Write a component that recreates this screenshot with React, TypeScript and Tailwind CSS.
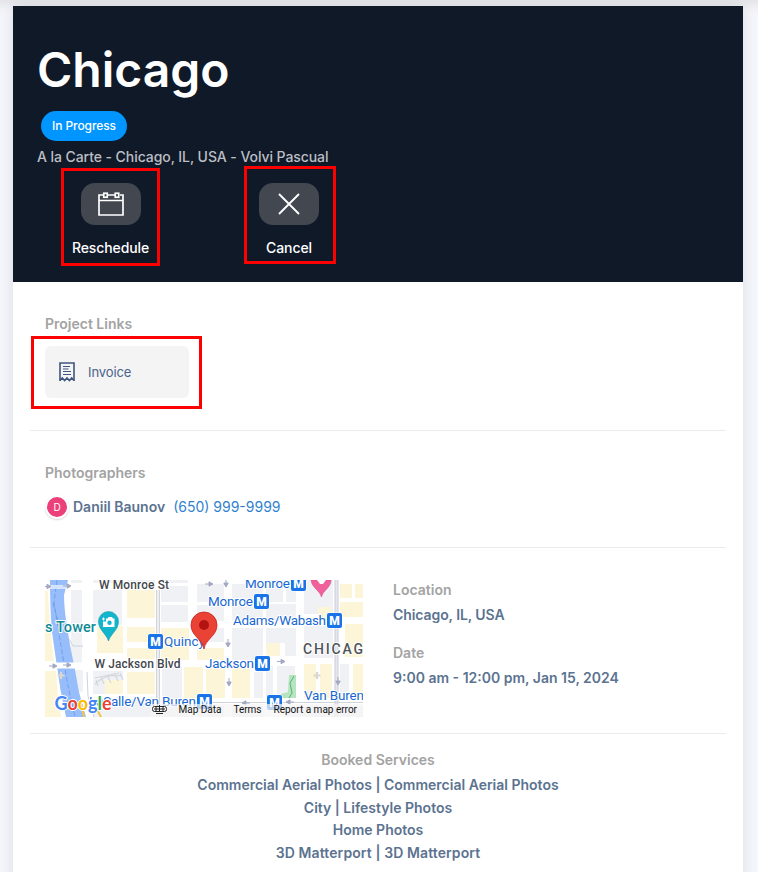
import React from 'react';

type Block = [number, number, number, number, string];
const G = '#eff1f4';
const C = '#fdf5d8';

const blocks: Block[] = [
  [71, 580, 11, 3, G], [71, 590, 11, 73, G], [73, 670, 10, 22, G],
  [93, 580, 29, 3, G], [93, 590, 29, 35, G], [97, 626, 26, 27, C], [93, 671, 30, 23, G], [105, 680, 18, 14, C],
  [127, 580, 28, 3, G], [127, 590, 28, 28, C], [127, 627, 28, 15, C], [127, 648, 28, 11, C], [127, 672, 28, 22, C],
  [161, 580, 27, 3, G], [161, 586, 27, 16, G], [161, 605, 27, 17, G], [161, 628, 28, 32, C], [162, 667, 20, 33, G],
  [197, 584, 27, 18, G], [197, 605, 27, 16, G], [197, 628, 27, 14, G], [197, 648, 27, 12, C],
  [184, 667, 19, 31, C], [206, 667, 19, 31, C],
  [232, 584, 31, 18, G], [232, 606, 31, 14, G], [232, 628, 31, 32, G], [232, 667, 18, 31, C], [254, 672, 9, 26, G],
  [266, 580, 17, 22, G], [286, 580, 10, 22, G], [266, 604, 30, 17, G], [266, 628, 30, 15, G], [266, 643, 14, 13, C],
  [285, 643, 11, 13, G], [266, 666, 7, 32, G], [277, 666, 18, 32, G],
  [304, 580, 29, 34, G], [318, 607, 14, 12, C], [304, 626, 29, 32, G], [304, 664, 12, 34, C], [320, 664, 12, 34, C],
  [340, 584, 12, 14, C], [355, 584, 8, 14, C], [340, 602, 23, 15, C], [345, 624, 18, 33, C], [340, 664, 9, 34, G], [353, 664, 10, 34, C],
  [93, 700, 62, 17, G], [161, 706, 27, 11, G], [197, 706, 27, 11, G], [232, 706, 31, 11, G], [284, 706, 49, 11, G], [340, 706, 23, 11, G],
];

type Label = { x: number; y: number; w?: number; t: string; c?: string; s?: number; b?: number };
const labels: Label[] = [
  { x: 99, y: 588.5, w: 70, t: 'W Monroe St', c: '#44474b', s: 12, b: 500 },
  { x: 94.5, y: 668, w: 86, t: 'W Jackson Blvd', c: '#44474b', s: 12, b: 500 },
  { x: 45, y: 632, w: 51, t: 's Tower', c: '#108a96', s: 14.5, b: 500 },
  { x: 245, y: 588, w: 45, t: 'Monroe' },
  { x: 208, y: 606, w: 45, t: 'Monroe' },
  { x: 233, y: 625, w: 93, t: 'Adams/Wabash' },
  { x: 164, y: 646, w: 41, t: 'Quincy' },
  { x: 205, y: 668, w: 49, t: 'Jackson' },
  { x: 304, y: 700, w: 60, t: 'Van Buren' },
  { x: 89, y: 706, w: 107, t: 'LaSalle/Van Buren' },
  { x: 303, y: 653.5, w: 60, t: 'CHICAG', c: '#50545a', s: 14, b: 500 },
];

const stations = [[291, 576], [254, 594], [327, 613], [148, 634], [255, 656], [197, 694], [267, 695]];
const arrows: [number, number, number][] = [
  [67, 586, 0], [47, 586.5, 0], [53, 666, 0], [67, 665, 0], [209, 584, 0], [226, 583, 90],
  [228, 643, 90], [229, 682, 90], [281, 661.5, 0], [338, 681, 90], [290, 702, 180], [246, 703, 180],
];

function MapView() {
  return (
    <svg className="block h-[137px] w-[318px] shrink-0" viewBox="45 580 318 137" fontFamily="Roboto, sans-serif">
      <rect x="45" y="580" width="318" height="137" fill="#fff" />
      {blocks.map(([x, y, w, h, c], i) => <rect key={i} x={x} y={y} width={w} height={h} fill={c} />)}
      <path d="M45 591H48L50 625 54 661H45Z" fill={C} />
      <path d="M45 671H56L58 696 61 717H45Z" fill={C} />
      <path d="M50 580H68L64 595Q64 605 66 620L70 645 75 670 79 692 86 717H66L61 692 56 660 52 632Q50 610 50 580Z" fill="#97bdfb" />
      <path d="M58 671H64V692L61 692Z" fill="#97bdfb" />
      <path d="M57 580L54 602 60 640 68 686 75 717M53 603L61 632" fill="none" stroke="#6f9ceb" strokeDasharray="5 2" strokeWidth=".9" />
      <path d="M45 587H50M68 587H93" stroke="#fff" strokeWidth="4" />
      <path d="M50 587H68" stroke="#fff" strokeWidth="4" opacity=".6" />
      <path d="M45 665.500H93" stroke="#fff" strokeWidth="6" />
      <path d="M69 639L73 646H83M87 672L88 696 94 717" fill="none" stroke="#ccd3e0" />
      <path d="M95 684Q106 673 122 676M95 678L119 673M96 680L98 686M101 677L104 684M107 675L111 683M114 673L118 681M120 673L123 680" fill="none" stroke="#d3d7de" strokeWidth="1.200" />
      <path d="M81 703L84 717M95 706L101 717" stroke="#f6c342" strokeWidth="2" />
      <path d="M158 590V717" stroke="#d1d4da" strokeWidth="4" />
      <path d="M158 590V717" stroke="#eceef1" strokeWidth="2" />
      <path d="M336.500 580V717" stroke="#c9cdd7" strokeWidth="4" />
      <path d="M336.500 580V717" stroke="#e5e7ec" strokeWidth="2" />
      <path d="M212 702.500H363" stroke="#cfd3da" strokeWidth="1" />
      <path d="M289 675H296V698H281V694L288 692Z" fill="#b5e4bf" />
      <path d="M294 676L290 683 292 693 289 698" fill="none" stroke="#58b377" />
      <path d="M317 672V679M313.500 675.500H320.500M61 672V679M57.500 675.500H64.500" stroke="#d9d7ce" strokeWidth="2.200" />
      {arrows.map(([x, y, a], i) => (
        <path key={i} transform={`translate(${x} ${y}) rotate(${a})`} d="M-4 0H2M0-2.200L4 0 0 2.200Z" fill="#a3a9c2" stroke="#a3a9c2" strokeWidth="1" />
      ))}
      {labels.map((l, i) => (
        <text key={i} x={l.x} y={l.y} textLength={l.w} fontSize={l.s ?? 13.5} fontWeight={l.b ?? 400} fill={l.c ?? '#1967d2'} stroke="#fff" strokeWidth="2" strokeLinejoin="round" paintOrder="stroke">{l.t}</text>
      ))}
      {stations.map(([x, y], i) => (
        <g key={i}>
          <rect x={x - 0.5} y={y - 0.500} width="16" height="16" rx="2.500" fill="#fff" />
          <rect x={x} y={y} width="15" height="15" rx="2" fill="#1a73e8" />
          <text x={x + 7.500} y={y + 11.700} textAnchor="middle" fontSize="12" fontWeight={900} fill="#fff">M</text>
        </g>
      ))}
      <path d="M108.500 641C106.500 634 98.500 630 98.500 621.500A10 10 0 0 1 118.500 621.500C118.500 630 110.500 634 108.500 641Z" fill="#12b5cb" stroke="#129aab" strokeWidth=".6" />
      <path d="M103 621.500H106V618.500H107.500L108.500 617H112L113 618.500H114.500V627H103Z" fill="#fff" />
      <circle cx="109.500" cy="622.700" r="2.200" fill="#12b5cb" />
      <path d="M103.500 617.500V620.500M102 619H105" stroke="#fff" />
      <path d="M311 580H331C331 588 323 590 321.500 597C319.500 590 312 588 311 580Z" fill="#f0609b" stroke="#d94884" strokeWidth=".6" />
      <path d="M317 580H326L323 584H320Z" fill="#fff" />
      <path d="M204 649C202.500 639 191 636 191 625A13 13 0 0 1 217 625C217 636 205.500 639 204 649Z" fill="#ea4335" stroke="#c5221f" strokeWidth=".8" />
      <circle cx="204" cy="625" r="5" fill="#b31412" />
      <rect x="150" y="704" width="213" height="13" fill="#f5f5f5" fillOpacity=".72" />
      <g fill="none" stroke="#222" strokeWidth="1">
        <rect x="152.500" y="706.500" width="14" height="5" rx="2" />
        <path d="M154 709H165M156 706V712M159.500 705V712M163 706V712M156 713.500H163" />
      </g>
      <g fontSize="10" fill="#111">
        <text x="178.500" y="713" textLength="43">Map Data</text>
        <text x="233.500" y="713" textLength="28">Terms</text>
        <text x="273.500" y="713" textLength="83.500">Report a map error</text>
      </g>
      <text x="54.500" y="709.500" textLength="57" lengthAdjust="spacingAndGlyphs" fontFamily="Lato, sans-serif" fontSize="19" fontWeight={700} stroke="#fff" strokeWidth="2" paintOrder="stroke" strokeLinejoin="round">
        <tspan fill="#4285f4">G</tspan><tspan fill="#ea4335">o</tspan><tspan fill="#fbbc04">o</tspan><tspan fill="#4285f4">g</tspan><tspan fill="#34a853">l</tspan><tspan fill="#ea4335">e</tspan>
      </text>
    </svg>
  );
}

function CalendarIcon() {
  return (
    <svg className="h-6 w-7" viewBox="0 0 28 24" fill="none" stroke="#fff">
      <path d="M6 3H2V23H26V3H23M11 3H18M2 8.500H26" strokeWidth="1.700" />
      <rect x="6.750" y="1.250" width="3.500" height="4" strokeWidth="1.700" />
      <rect x="18.250" y="1.250" width="3.500" height="4" strokeWidth="1.700" />
    </svg>
  );
}

function ReceiptIcon() {
  return (
    <svg className="h-5 w-4" viewBox="0 0 16 20" fill="none" stroke="#3f5680">
      <path d="M1 19V1H15V19" strokeWidth="1.600" />
      <path d="M1 18.500L3.300 16 5.600 18.500 8 16 10.400 18.500 12.700 16 15 18.500" strokeWidth="1.600" />
      <path d="M4 4.500H11M4 7H9.500M4 9.500H12M4 12.500H12" strokeWidth="1.200" />
    </svg>
  );
}

const heading = 'text-[14px] font-semibold leading-5 text-[#a3a3a3]';
const value = 'text-[14px] font-semibold leading-5 text-[#5b7390]';
const services = ['Commercial Aerial Photos | Commercial Aerial Photos', 'City | Lifestyle Photos', 'Home Photos', '3D Matterport | 3D Matterport'];

export default function App() {
  return (
    <div className="h-[872px] overflow-hidden bg-[#f5f6fb] px-[13px] pr-[15px] pt-1.5 font-['Inter',sans-serif] shadow-[inset_0_14px_8px_-8px_#e4e5e9]">
      <main className="h-[900px] w-[730px] bg-white shadow-[0_0_14px_rgba(0,0,0,0.1)]">
        <header className="h-[276px] bg-[#101928] pl-6 pt-[34px]">
          <h1 className="text-[48px] font-semibold leading-[60px] text-white">Chicago</h1>
          <div className="ml-1 mt-[11px] flex h-[30px] w-[86px] items-center justify-center rounded-full bg-[#0095ff] text-xs font-medium tracking-[-0.08px] text-white">In Progress</div>
          <p className="mt-1.5 whitespace-nowrap text-[14px] font-medium leading-5 tracking-[-0.07px] text-[#bcbfc4]">A la Carte - Chicago, IL, USA - Volvi Pascual</p>
          <div className="flex">
            <div className="ml-6 mt-[1px] flex h-[98px] w-[99px] flex-col items-center border-[3px] border-[#fe0000] pt-3">
              <div className="flex h-[42px] w-[60px] items-center justify-center rounded-[14px] bg-[#424750]"><CalendarIcon /></div>
              <span className="mt-[13px] text-[14px] font-medium leading-5 tracking-[-0.1px] text-white">Reschedule</span>
            </div>
            <div className="ml-[84px] mt-[-1px] flex h-[98px] w-[92px] flex-col items-center border-[3px] border-[#fe0000] pr-[2px] pt-[14px]">
              <div className="flex h-[42px] w-[60px] items-center justify-center rounded-[14px] bg-[#424750]">
                <svg className="h-6 w-6" viewBox="0 0 24 24" stroke="#fff" strokeWidth="1.900"><path d="M2 2L22 22M22 2L2 22" /></svg>
              </div>
              <span className="mt-[13px] text-[14px] font-medium leading-5 tracking-[-0.1px] text-white">Cancel</span>
            </div>
          </div>
        </header>
        <div className="px-[17px]">
          <section className="h-[149px] border-b border-[#ebebeb] pl-[15px] pt-8">
            <h2 className={heading}>Project Links</h2>
            <div className="-ml-[14px] mt-0.5 h-[73px] w-[171px] border-[3px] border-[#fe0000] pl-[11px] pt-[7px]">
              <a className="flex h-[52px] w-36 items-center rounded-md bg-[#f4f4f4] pl-[14px] text-[13px] tracking-[-0.1px] text-[#4a638a]"><ReceiptIcon /><span className="ml-[13px] pt-0.5">Invoice</span></a>
            </div>
          </section>
          <section className="h-[117px] border-b border-[#ebebeb] pl-[15px] pt-8">
            <h2 className={heading}>Photographers</h2>
            <div className="mt-3 flex h-6 items-center">
              <span className="flex h-6 w-6 items-center justify-center rounded-full border-2 border-white bg-[#ec407a] text-[10px] text-white shadow-[0_1px_2px_rgba(0,0,0,0.15)]">D</span>
              <b className={`ml-1 ${value}`}>Daniil Baunov</b>
              <a className="ml-2 text-[14px] leading-5 text-[#3182ce]">(650) 999-9999</a>
            </div>
          </section>
          <section className="flex h-[186px] border-b border-[#ebebeb] pl-[15px] pt-8">
            <MapView />
            <div className="ml-[30px]">
              <h2 className={heading}>Location</h2>
              <p className={`mt-[5px] tracking-[-0.08px] ${value}`}>Chicago, IL, USA</p>
              <h2 className={`mt-[18px] ${heading}`}>Date</h2>
              <p className={`mt-[5px] ${value}`}>9:00 am - 12:00 pm, Jan 15, 2024</p>
            </div>
          </section>
          <section className="pt-4 text-center">
            <h2 className={heading}>Booked Services</h2>
            <div className="mt-[4.4px]">
              {services.map((s) => <p key={s} className="text-[14px] font-semibold leading-[22.4px] text-[#5b7390] last:tracking-[0.1px]">{s}</p>)}
            </div>
          </section>
        </div>
      </main>
    </div>
  );
}
